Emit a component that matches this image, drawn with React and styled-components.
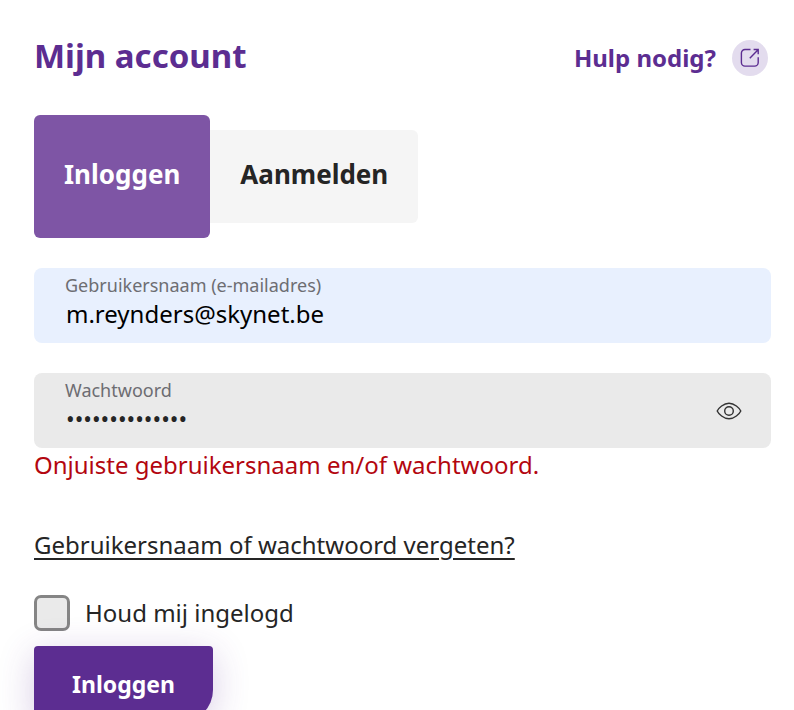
import { useState } from "react";
import styled, { createGlobalStyle } from "styled-components";

export default function App() {
  const [tab, setTab] = useState("login");
  const [username, setUsername] = useState("m.reynders@skynet.be");
  const [password, setPassword] = useState("wachtwoord1234");
  const [visible, setVisible] = useState(false);
  const [remember, setRemember] = useState(false);

  function submit(event) {
    event.preventDefault();
  }

  return (
    <>
      <GlobalStyle />
      <Page>
        <Header>
          <Title>Mijn account</Title>
          <HelpLink href="#hulp">
            Hulp nodig?
            <HelpBadge>
              <ExternalIcon />
            </HelpBadge>
          </HelpLink>
        </Header>
        <Tabs>
          <Tab type="button" $active={tab === "login"} onClick={() => setTab("login")}>
            Inloggen
          </Tab>
          <Tab type="button" $active={tab === "register"} onClick={() => setTab("register")}>
            Aanmelden
          </Tab>
        </Tabs>
        <Form onSubmit={submit}>
          <Field $filled>
            <FieldText>
              <Label htmlFor="username">Gebruikersnaam (e-mailadres)</Label>
              <Input
                id="username"
                type="text"
                value={username}
                onChange={(e) => setUsername(e.target.value)}
              />
            </FieldText>
          </Field>
          <Field>
            <FieldText>
              <Label htmlFor="password">Wachtwoord</Label>
              <Input
                id="password"
                type={visible ? "text" : "password"}
                value={password}
                onChange={(e) => setPassword(e.target.value)}
              />
            </FieldText>
            <EyeButton
              type="button"
              aria-label="Toon wachtwoord"
              onClick={() => setVisible(!visible)}
            >
              <EyeIcon />
            </EyeButton>
          </Field>
          <ErrorText>Onjuiste gebruikersnaam en/of wachtwoord.</ErrorText>
          <ForgotLink href="#vergeten">Gebruikersnaam of wachtwoord vergeten?</ForgotLink>
          <Remember>
            <Checkbox
              id="remember"
              type="checkbox"
              checked={remember}
              onChange={(e) => setRemember(e.target.checked)}
            />
            <RememberLabel htmlFor="remember">Houd mij ingelogd</RememberLabel>
          </Remember>
          <SubmitButton type="submit">Inloggen</SubmitButton>
        </Form>
      </Page>
    </>
  );
}

function ExternalIcon() {
  return (
    <svg width="20" height="20" viewBox="0 0 20 20" fill="none" stroke="#5c2d91" strokeWidth="1.4">
      <path d="M10.500 1.500H5A3.600 3.600 0 0 0 1.400 5.100v9.400A3.600 3.600 0 0 0 5 18.100h9.600a3.600 3.600 0 0 0 3.600-3.600V9.300" />
      <path d="M9.800 10.200 17.600 2.200M13.600 1.500h4.600v4.700" />
    </svg>
  );
}

function EyeIcon() {
  return (
    <svg width="26" height="18" viewBox="0 0 26 18" fill="none" stroke="#333" strokeWidth="1.4">
      <path d="M1.200 9C2.600 6 7.600 1.200 13 1.200S23.400 6 24.800 9C23.400 12 18.400 16.800 13 16.800S2.600 12 1.200 9Z" />
      <circle cx="13" cy="9" r="4.300" />
    </svg>
  );
}

const GlobalStyle = createGlobalStyle`
  * {
    box-sizing: border-box;
  }
  body {
    margin: 0;
    background-color: #fff;
    color: #252525;
    font-family: "Noto Sans", sans-serif;
    font-size: 24px;
    line-height: 32px;
  }
  button,
  input {
    font-family: inherit;
  }
`;

const Page = styled.main`
  padding: 32px 23px 32px 34px;
`;

const Header = styled.header`
  display: flex;
  align-items: center;
  justify-content: space-between;
  padding-right: 3px;
`;

const Title = styled.h1`
  margin: 0;
  color: #5c2d91;
  font-size: 33px;
  font-weight: 700;
  line-height: 48px;
`;

const HelpLink = styled.a`
  display: flex;
  align-items: center;
  gap: 16px;
  padding-top: 4px;
  color: #5c2d91;
  font-weight: 700;
  text-decoration: none;
`;

const HelpBadge = styled.span`
  display: flex;
  align-items: center;
  justify-content: center;
  width: 36px;
  height: 36px;
  border-radius: 50%;
  background-color: #e3dcee;
`;

const Tabs = styled.nav`
  display: flex;
  align-items: center;
  margin-top: 35px;
`;

const Tab = styled.button`
  padding: ${({ $active }) => ($active ? "43px 30px 47px" : "28px 30px 32px")};
  border: none;
  border-radius: ${({ $active }) => ($active ? "6px" : "0 6px 6px 0")};
  background-color: ${({ $active }) => ($active ? "#7e55a5" : "#f5f5f5")};
  color: ${({ $active }) => ($active ? "#fff" : "#252525")};
  font-size: 26px;
  font-weight: 700;
  line-height: 33px;
  cursor: pointer;
`;

const Form = styled.form`
  display: flex;
  flex-direction: column;
  align-items: flex-start;
  margin-top: 30px;
`;

const Field = styled.div`
  display: flex;
  align-items: center;
  width: 100%;
  padding: 5px 29px 5px 31px;
  border-radius: 8px;
  background-color: ${({ $filled }) => ($filled ? "#e8f0fe" : "#eaeaea")};
  & + & {
    margin-top: 30px;
  }
`;

const FieldText = styled.div`
  display: flex;
  flex: 1;
  flex-direction: column;
  padding-bottom: 8px;
`;

const Label = styled.label`
  color: #6d6d72;
  font-size: 18px;
  line-height: 24px;
`;

const Input = styled.input`
  width: 100%;
  height: 33px;
  padding: 0 1px;
  border: none;
  outline: none;
  background: transparent;
  color: ${({ type }) => (type === "password" ? "#252525" : "#000")};
  font-size: ${({ type }) => (type === "password" ? "23px" : "24px")};
`;

const EyeButton = styled.button`
  display: flex;
  padding: 0;
  border: none;
  background: transparent;
  cursor: pointer;
`;

const ErrorText = styled.p`
  margin: 1px 0 0;
  color: #b3060f;
`;

const ForgotLink = styled.a`
  margin-top: 48px;
  color: #252525;
  text-underline-offset: 4px;
`;

const Remember = styled.div`
  display: flex;
  align-items: center;
  gap: 15px;
  margin-top: 34px;
`;

const Checkbox = styled.input`
  appearance: none;
  width: 36px;
  height: 36px;
  margin: 0;
  border: 3px solid #858585;
  border-radius: 7px;
  background-color: #eaeaea;
  &:checked {
    background-color: #5c2d91;
  }
`;

const RememberLabel = styled.label`
  cursor: pointer;
`;

const SubmitButton = styled.button`
  margin-top: 15px;
  padding: 20px 38px;
  border: none;
  border-radius: 4px 4px 32px 4px;
  background-color: #5c2d91;
  box-shadow: 0 8px 36px rgba(92, 45, 145, 0.24);
  color: #fff;
  font-size: 23px;
  font-weight: 700;
  line-height: 36px;
  cursor: pointer;
`;
